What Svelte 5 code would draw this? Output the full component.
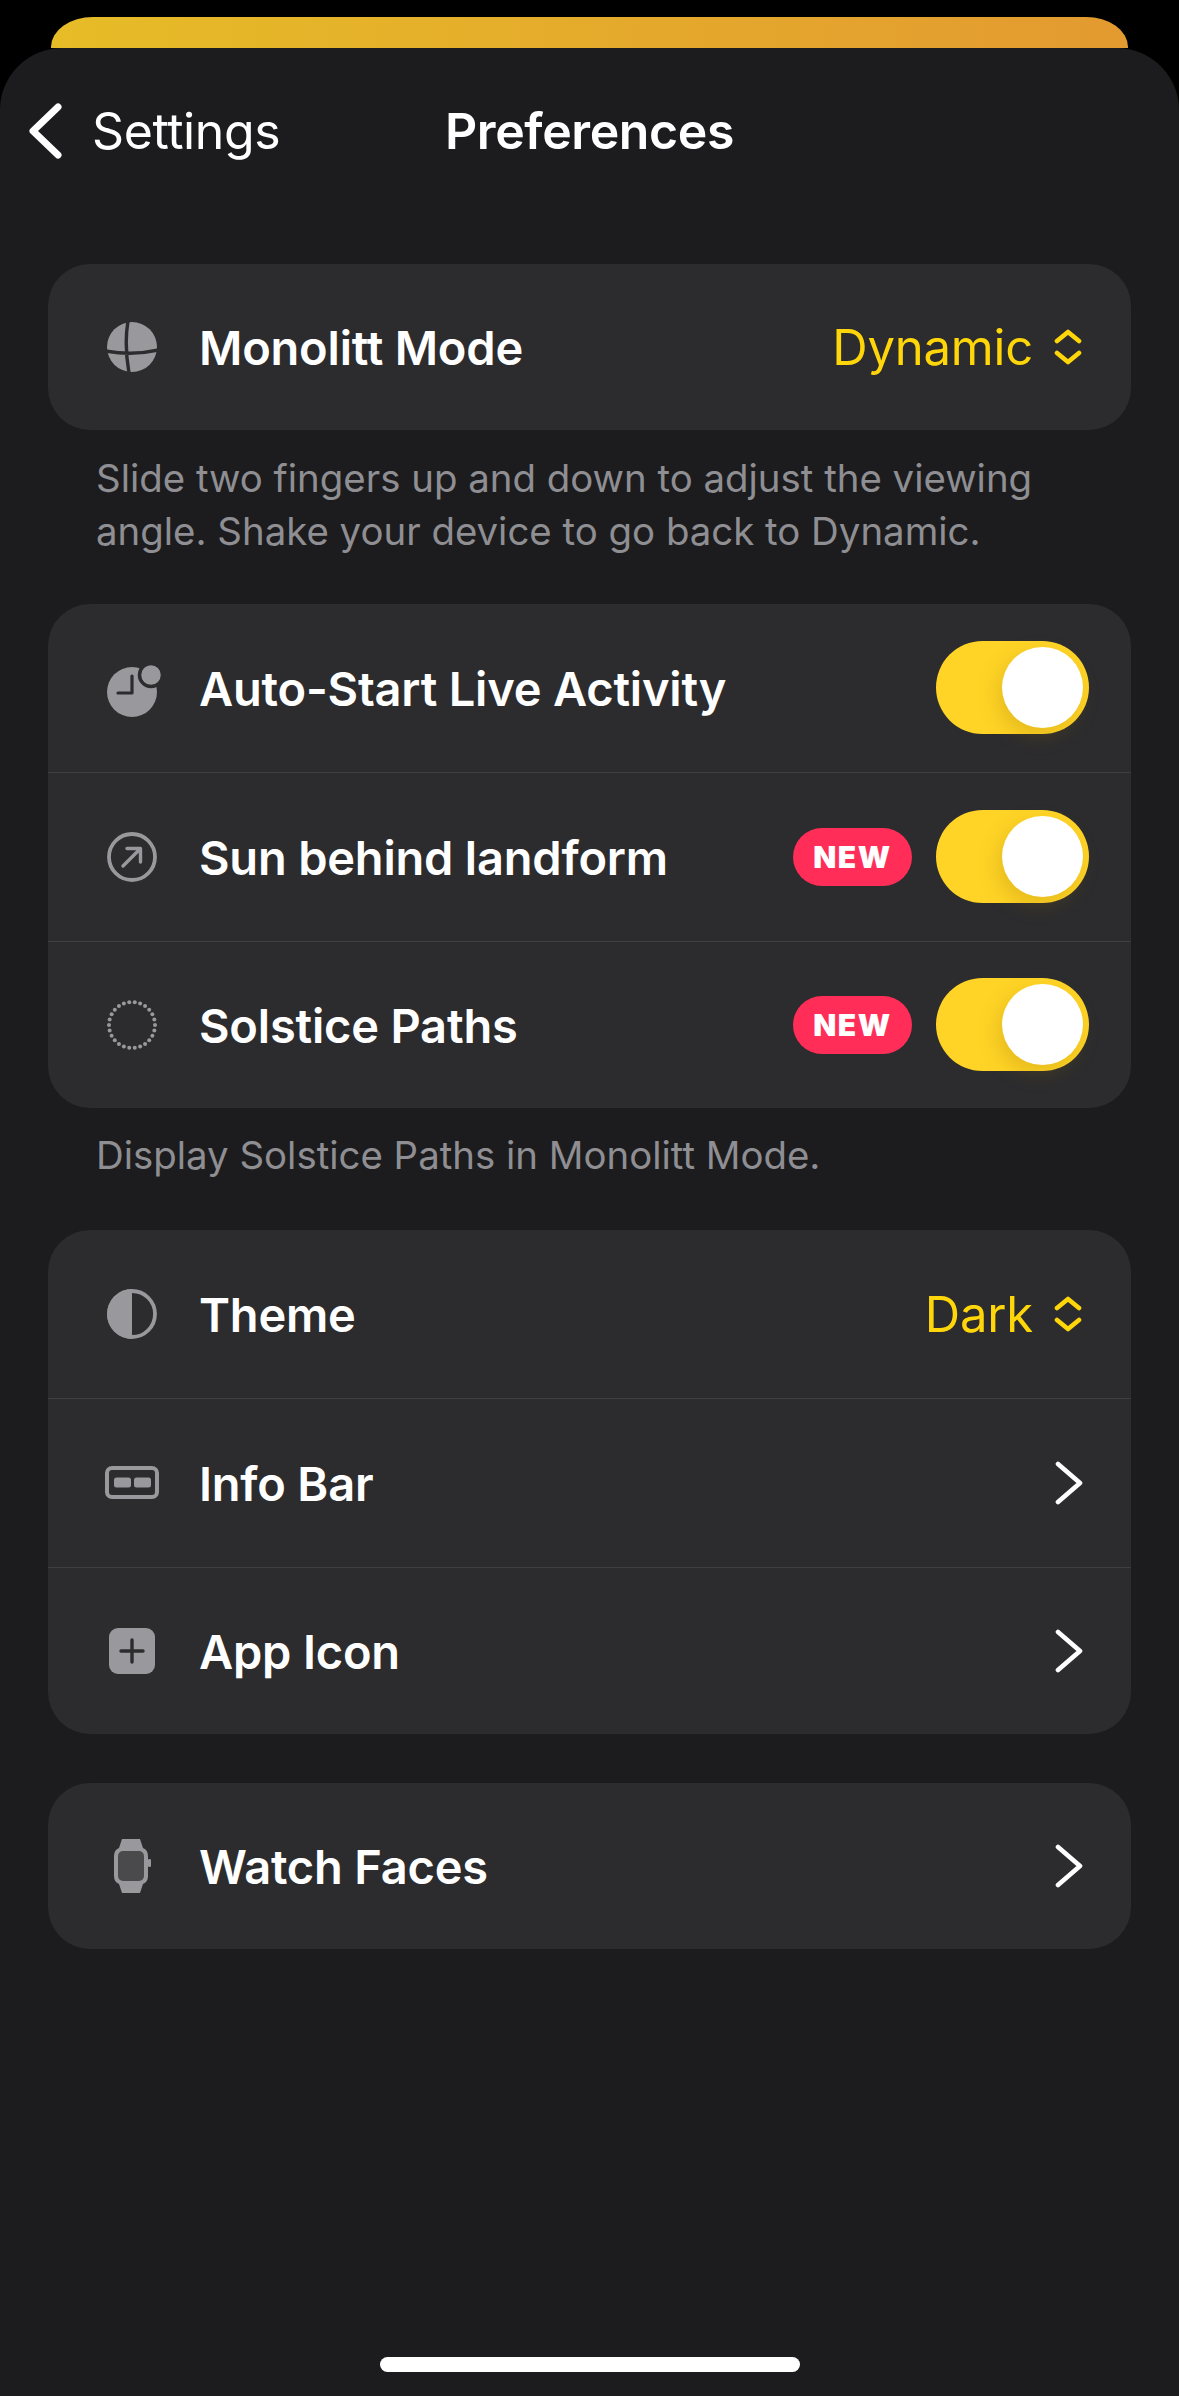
<script>
  const dots = Array.from({ length: 26 }, (_, i) => {
    const a = (i / 26) * Math.PI * 2;
    return { x: 25 + 23 * Math.cos(a), y: 25 + 23 * Math.sin(a) };
  });
</script>

{#snippet updown()}
  <svg class="updown" viewBox="0 0 28 36" width="28" height="36" fill="none" stroke="#FFD60A" stroke-width="4.6" stroke-linecap="round" stroke-linejoin="round">
    <path d="M3 12 L14 3 L25 12" /><path d="M3 24 L14 33 L25 24" />
  </svg>
{/snippet}
{#snippet chevron()}
  <svg class="chev" viewBox="0 0 28 44" width="28" height="44" fill="none" stroke="#fff" stroke-width="4.6" stroke-linecap="round" stroke-linejoin="round">
    <path d="M3 3 L25 22 L3 41" />
  </svg>
{/snippet}
{#snippet toggle()}
  <span class="toggle"><span class="knob"></span></span>
{/snippet}
{#snippet badge()}
  <span class="badge">NEW</span>
{/snippet}

<div class="page">
  <div class="peek"></div>
  <div class="sheet">
    <header class="nav">
      <div class="back">
        <svg viewBox="0 0 34 56" width="34" height="56" fill="none" stroke="#fff" stroke-width="7" stroke-linecap="round" stroke-linejoin="round">
          <path d="M30 4 L5 28 L30 52" />
        </svg>
        <span>Settings</span>
      </div>
      <div class="title">Preferences</div>
    </header>

    <section class="card single">
      <div class="row">
        <svg class="icon" viewBox="0 0 50 50" width="50" height="50">
          <circle cx="25" cy="25" r="25" fill="#98989d" />
          <path d="M21 -1 Q17 22 22 51 M-1 29 Q25 34 51 28" fill="none" stroke="#2c2c2e" stroke-width="3.4" />
        </svg>
        <span class="label">Monolitt Mode</span>
        <span class="value">Dynamic</span>
        {@render updown()}
      </div>
    </section>
    <p class="note two">Slide two fingers up and down to adjust the viewing angle. Shake your device to go back to Dynamic.</p>

    <section class="card">
      <div class="row">
        <svg class="icon clock" viewBox="0 0 54 54" width="54" height="54">
          <circle cx="27" cy="31" r="25" fill="#98989d" />
          <circle cx="46" cy="14" r="11.5" fill="#98989d" stroke="#2c2c2e" stroke-width="3.5" />
          <path d="M27 15 V32 H13" fill="none" stroke="#2c2c2e" stroke-width="3.2" stroke-linecap="round" stroke-linejoin="round" />
        </svg>
        <span class="label">Auto-Start Live Activity</span>
        {@render toggle()}
      </div>
      <div class="row">
        <svg class="icon" viewBox="0 0 50 50" width="50" height="50" fill="none" stroke="#98989d">
          <circle cx="25" cy="25" r="23" stroke-width="3.8" />
          <path d="M16 34 L33 17 M20 16.5 H33.5 V30" stroke-width="3.4" stroke-linecap="round" stroke-linejoin="round" />
        </svg>
        <span class="label">Sun behind landform</span>
        {@render badge()}
        {@render toggle()}
      </div>
      <div class="row">
        <svg class="icon" viewBox="0 0 50 50" width="50" height="50">
          {#each dots as d}<circle cx={d.x} cy={d.y} r="2" fill="#98989d" />{/each}
        </svg>
        <span class="label">Solstice Paths</span>
        {@render badge()}
        {@render toggle()}
      </div>
    </section>
    <p class="note one">Display Solstice Paths in Monolitt Mode.</p>

    <section class="card">
      <div class="row">
        <svg class="icon" viewBox="0 0 50 50" width="50" height="50" fill="none">
          <circle cx="25" cy="25" r="23" stroke="#98989d" stroke-width="3.8" />
          <path d="M25 0 A25 25 0 0 0 25 50 Z" fill="#98989d" />
        </svg>
        <span class="label">Theme</span>
        <span class="value">Dark</span>
        {@render updown()}
      </div>
      <div class="row">
        <svg class="icon" viewBox="0 0 54 34" width="54" height="34" fill="none">
          <rect x="2" y="2" width="50" height="29" rx="5" stroke="#98989d" stroke-width="4" />
          <rect x="9" y="11.5" width="17" height="10" rx="2.5" fill="#98989d" />
          <rect x="29" y="11.5" width="17" height="10" rx="2.5" fill="#98989d" />
        </svg>
        <span class="label">Info Bar</span>
        {@render chevron()}
      </div>
      <div class="row">
        <svg class="icon" viewBox="0 0 46 46" width="46" height="46">
          <rect width="46" height="46" rx="9" fill="#98989d" />
          <path d="M23 12 V34 M12 23 H34" stroke="#2c2c2e" stroke-width="3.4" stroke-linecap="round" />
        </svg>
        <span class="label">App Icon</span>
        {@render chevron()}
      </div>
    </section>

    <section class="card single last">
      <div class="row">
        <svg class="icon" viewBox="0 0 38 54" width="38" height="54">
          <path d="M9 0 H27 L30 9 Q35 11 35 17 V37 Q35 43 30 45 L27 54 H9 L6 45 Q1 43 1 37 V17 Q1 11 6 9 Z" fill="#98989d" />
          <rect x="35" y="20" width="3" height="8" rx="1.2" fill="#98989d" />
          <rect x="5" y="12" width="26" height="30" rx="5" fill="#4a4a4d" />
        </svg>
        <span class="label">Watch Faces</span>
        {@render chevron()}
      </div>
    </section>

    <div class="home"></div>
  </div>
</div>

<style>
  :global(body) { margin: 0; background: #000; }
  .page {
    width: 1179px;
    height: 2396px;
    background: #000;
    padding-top: 17px;
    box-sizing: border-box;
    display: flex;
    flex-direction: column;
    overflow: hidden;
    font-family: Inter, "Liberation Sans", sans-serif;
    -webkit-font-smoothing: antialiased;
  }
  .peek {
    flex: none;
    height: 31px;
    margin: 0 51px;
    border-radius: 42px 42px 0 0 / 30px 30px 0 0;
    background: linear-gradient(90deg, #e6bc27, #e39a30);
  }
  .sheet {
    flex: 1;
    background: #1c1c1e;
    border-radius: 62px 62px 0 0;
    display: flex;
    flex-direction: column;
    padding: 0 48px;
    min-height: 0;
  }
  .nav {
    height: 167px;
    margin: 0 -48px 49px;
    padding: 55px 0 0 28px;
    box-sizing: border-box;
    display: flex;
    align-items: flex-start;
    position: relative;
    color: #fff;
  }
  .back { display: flex; align-items: center; gap: 30px; height: 56px; }
  .back span { font-size: 50px; letter-spacing: -0.4px; }
  .title {
    position: absolute;
    left: 0;
    right: 0;
    top: 55px;
    height: 56px;
    line-height: 56px;
    text-align: center;
    font-size: 50px;
    font-weight: 600;
    letter-spacing: -0.4px;
  }
  .card {
    background: #2c2c2e;
    border-radius: 42px;
    flex: none;
  }
  .card.last { margin-top: 49px; }
  .row {
    height: 168px;
    box-sizing: border-box;
    padding-right: 42px;
    display: flex;
    align-items: center;
    position: relative;
    color: #fff;
  }
  .row:nth-child(2) { height: 169px; }
  .row:nth-child(3) { height: 167px; }
  .single .row { height: 166px; }
  .row + .row { border-top: 1.5px solid #3f3f41; }
  .icon {
    position: absolute;
    left: 84px;
    top: 50%;
    transform: translate(-50%, -50%);
  }
  .clock { overflow: visible; }
  .label {
    margin-left: 151px;
    margin-right: auto;
    font-size: 47px;
    font-weight: 600;
    letter-spacing: -0.2px;
  }
  .value {
    font-size: 49px;
    color: #ffd60a;
    letter-spacing: -0.2px;
    margin-right: 21px;
  }
  .updown { flex: none; margin-right: 7px; }
  .chev { flex: none; margin-right: 6px; }
  .toggle {
    width: 153px;
    height: 93px;
    margin-top: -2px;
    border-radius: 47px;
    background: #ffd426;
    flex: none;
    position: relative;
  }
  .knob {
    position: absolute;
    right: 6px;
    top: 6px;
    width: 81px;
    height: 81px;
    border-radius: 50%;
    background: #fff;
    box-shadow: -4px 8px 20px rgba(150, 110, 0, 0.25);
  }
  .badge {
    width: 119px;
    height: 58px;
    margin-top: -1px;
    border-radius: 29px;
    background: #ff2d58;
    color: #fff;
    font-size: 30px;
    font-weight: 900;
    letter-spacing: 1.5px;
    display: flex;
    align-items: center;
    justify-content: center;
    margin-right: 24px;
    flex: none;
  }
  .note {
    margin: 0;
    padding: 0 48px;
    color: #8e8e93;
    font-size: 38.4px;
    line-height: 53px;
    box-sizing: border-box;
    flex: none;
  }
  .note.two { height: 174px; padding-top: 22px; }
  .note.one { height: 122px; padding-top: 21px; }
  .home {
    margin-top: auto;
    margin-bottom: 24px;
    align-self: center;
    width: 420px;
    height: 15px;
    border-radius: 8px;
    background: #fff;
    flex: none;
  }
</style>
